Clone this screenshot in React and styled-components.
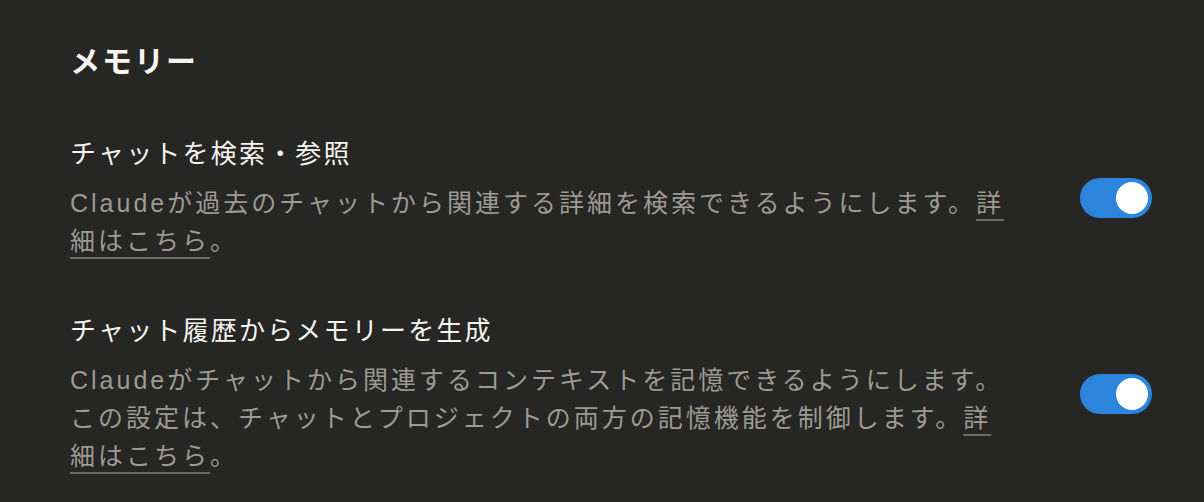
import React from "react";
import styled, { createGlobalStyle } from "styled-components";

const GlobalStyle = createGlobalStyle`
  html, body {
    margin: 0;
    padding: 0;
    background: #262624;
  }
  body {
    font-family: "Liberation Sans", "Noto Sans CJK JP", sans-serif;
    -webkit-font-smoothing: antialiased;
  }
`;

const settings = [
  {
    title: "チャットを検索・参照",
    text: "Claudeが過去のチャットから関連する詳細を検索できるようにします。",
    on: true,
  },
  {
    title: "チャット履歴からメモリーを生成",
    text: "Claudeがチャットから関連するコンテキストを記憶できるようにします。この設定は、チャットとプロジェクトの両方の記憶機能を制御します。",
    on: true,
  },
];

const App = () => {
  return (
    <>
      <GlobalStyle />
      <Page>
        <Heading>メモリー</Heading>
        <List>
          {settings.map((s) => (
            <Row key={s.title}>
              <TextBlock>
                <Title>{s.title}</Title>
                <Description>
                  {s.text}
                  <Link href="#">詳細はこちら</Link>。
                </Description>
              </TextBlock>
              <Toggle $on={s.on} aria-checked={s.on} role="switch">
                <Knob $on={s.on} />
              </Toggle>
            </Row>
          ))}
        </List>
      </Page>
    </>
  );
};

const Page = styled.div`
  width: 1204px;
  height: 502px;
  box-sizing: border-box;
  padding: 40px 52px 0 70px;
  background: #262624;
  overflow: hidden;
`;

const Heading = styled.h2`
  margin: 0;
  font-size: 30px;
  line-height: 44px;
  font-weight: 700;
  letter-spacing: 2px;
  color: #f5f4ef;
`;

const List = styled.div`
  display: flex;
  flex-direction: column;
  gap: 53px;
  margin-top: 52px;
`;

const Row = styled.div`
  display: flex;
  align-items: center;
  justify-content: space-between;
`;

const TextBlock = styled.div`
  width: 936px;
  display: flex;
  flex-direction: column;
  gap: 12px;
`;

const Title = styled.div`
  font-size: 26px;
  line-height: 36px;
  letter-spacing: 2.2px;
  color: #f5f4ef;
`;

const Description = styled.p`
  margin: 0;
  font-size: 25px;
  line-height: 38px;
  letter-spacing: 3px;
  color: #9c9a92;
`;

const Link = styled.a`
  color: inherit;
  text-decoration: underline;
  text-decoration-color: #6c6a65;
  text-decoration-thickness: 2px;
  text-underline-offset: 7px;
`;

const Toggle = styled.div`
  flex-shrink: 0;
  width: 72px;
  height: 40px;
  box-sizing: border-box;
  padding: 4px;
  border-radius: 20px;
  background: ${(p) => (p.$on ? "#2c84db" : "#4a4945")};
  display: flex;
  justify-content: ${(p) => (p.$on ? "flex-end" : "flex-start")};
`;

const Knob = styled.span`
  width: 32px;
  height: 32px;
  border-radius: 50%;
  background: #ffffff;
`;

export default App;
